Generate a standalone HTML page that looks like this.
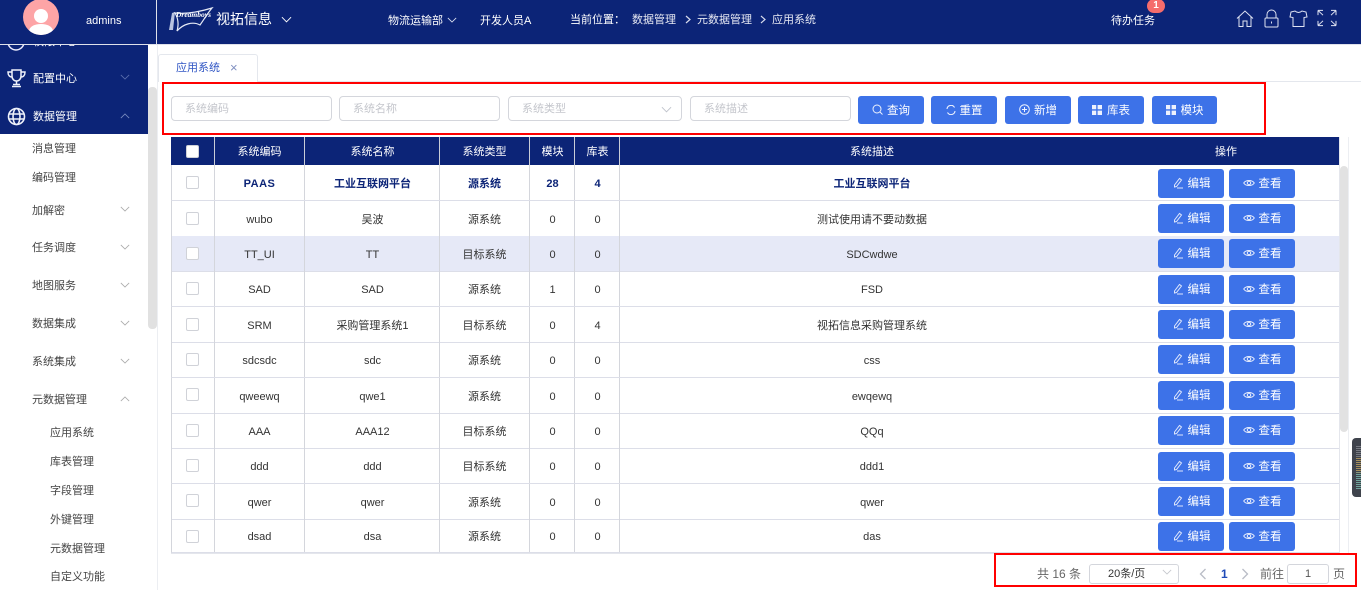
<!DOCTYPE html>
<html lang="zh"><head><meta charset="utf-8"><title>应用系统</title>
<style>
*{box-sizing:border-box}
html,body{margin:0;padding:0;width:1361px;height:590px;overflow:hidden;background:#fff;font:11px/1 "Liberation Sans","Noto Sans CJK SC",sans-serif;color:#333}
.a{position:absolute;white-space:nowrap}
.hd{position:absolute;left:0;top:0;width:1361px;height:44px;background:#0c2477}
.w{color:#fff}
.side{position:absolute;left:0;top:45px;width:148px;height:545px;overflow:hidden}
.dark{position:absolute;left:0;top:0;width:148px;height:89px;background:#0c2477}
.m{position:absolute;left:32px;color:#444;white-space:nowrap;margin-top:1px}
.s{position:absolute;left:50px;color:#444;white-space:nowrap;margin-top:1px}
.ch{position:absolute;left:120px;width:10px;height:6px;margin-top:1px}
.inp{position:absolute;top:96px;height:25px;border:1px solid #d4d6dc;border-radius:4px;color:#c4c6cc;padding:7px 13px;background:#fff}
.b{position:absolute;background:#3d72e8;color:#fff;border-radius:3px;display:flex;align-items:center;justify-content:center;gap:4px;font-size:11.5px;padding-top:3px}
.b svg{margin-bottom:4px}
.t{top:96px;height:28px}
.r{position:absolute;left:171px;width:1168px;border-bottom:1px solid #dcdee8;border-left:1px solid #d4d6dc;display:block}
.r>span{position:absolute;top:0;height:100%;display:flex;align-items:center;justify-content:center;border-left:1px solid #d4d6dc;padding-top:3px}
.c1{left:42px;width:90px}.c2{left:132px;width:136px}.c3{left:267px;width:90px}.c4{left:357px;width:46px}.c5{left:402px;width:46px}.c6{left:447px;width:505px}
.h{background:#0c2477;color:#fff;border-bottom:none;border-left:none}
.h>span{border-left:1px solid #c9cdd8;padding-top:2px}
.cb{position:absolute;width:13px;height:13px;border:1px solid #d0d2d8;border-radius:2px;background:#fff;left:186px}
.e{width:66px;height:29px;left:1158px}
.v{width:66px;height:29px;left:1229px}
.p{color:#666;position:absolute;white-space:nowrap;font-size:12px}
svg{display:block}
</style></head><body>
<svg width="0" height="0" style="position:absolute"><defs>
<symbol id="pen" viewBox="0 0 12 12"><path d="M2.5 8 L7.5 1.5 L9.5 3 L4.5 9.5 L2.5 10 Z M5 11 H11" fill="none" stroke="#dfe7fb" stroke-width="1"/></symbol>
<symbol id="eye" viewBox="0 0 12 12"><path d="M.7 6 C3 2.6 9 2.6 11.3 6 C9 9.4 3 9.4 .7 6 Z" fill="none" stroke="#e6ecfc" stroke-width="1"/><circle cx="6" cy="6" r="1.7" fill="none" stroke="#e6ecfc"/></symbol>
<symbol id="grid" viewBox="0 0 10 10"><path d="M0 0h4.2v4.2H0zM5.6 0H10v4.2H5.6zM0 5.6h4.2V10H0zM5.6 5.6H10V10H5.6z" fill="#eef2fd"/></symbol>
<symbol id="dn" viewBox="0 0 12 7"><path d="M1 1 L6 6 L11 1" fill="none" stroke="currentColor" stroke-width="1"/></symbol>
<symbol id="up" viewBox="0 0 12 7"><path d="M1 6 L6 1 L11 6" fill="none" stroke="currentColor" stroke-width="1"/></symbol>
</defs></svg>

<div class="hd"></div>
<div class="a" style="left:0;top:44px;width:1361px;height:1px;background:#dfe1ea"></div>
<div class="a" style="left:156px;top:0;width:1px;height:44px;background:#dfe1ea"></div>
<div class="a" style="left:23px;top:-1px;width:36px;height:36px;border-radius:50%;background:#fda4a6;overflow:hidden"><div style="position:absolute;left:11px;top:10px;width:14px;height:14px;border-radius:50%;background:#fff"></div><div style="position:absolute;left:6px;top:25px;width:24px;height:14px;border-radius:50%;background:#fff"></div></div>
<div class="a w" style="left:86px;top:16px">admins</div>

<svg class="a" style="left:167px;top:4px" width="47" height="28" viewBox="0 0 47 28"><path d="M2 26 L5 9 L8 8 L6 26 Z" fill="#b9c3e0"/><path d="M8 9 C18 10 32 8 45 4 C40 10 38 14 33 21 C26 17 16 20 10 27 C12 20 11 14 8 9 Z" fill="none" stroke="#e6eaf6" stroke-width="1.2"/><text x="9" y="13" font-family="Liberation Serif,serif" font-style="italic" font-weight="700" font-size="7.500" fill="#fff">Dreamboys</text></svg>
<div class="a w" style="left:216px;top:12px;font-size:14px">视拓信息</div>
<svg class="a w" style="left:281px;top:16px" width="11" height="7"><use href="#dn"/></svg>

<div class="a w" style="left:388px;top:16px">物流运输部</div>
<svg class="a w" style="left:447px;top:17px;color:#dfe3f2" width="10" height="6"><use href="#dn"/></svg>
<div class="a w" style="left:480px;top:16px">开发人员A</div>
<div class="a w" style="left:570px;top:15px">当前位置：</div>
<div class="a" style="left:632px;top:15px;color:#e6e8f2">数据管理</div>
<svg class="a" style="left:685px;top:15px" width="6" height="9" fill="none" stroke="#d8dcec" stroke-width="1.200"><path d="M1 1 L5 4.500 L1 8"/></svg>
<div class="a" style="left:697px;top:15px;color:#e6e8f2">元数据管理</div>
<svg class="a" style="left:760px;top:15px" width="6" height="9" fill="none" stroke="#d8dcec" stroke-width="1.200"><path d="M1 1 L5 4.500 L1 8"/></svg>
<div class="a" style="left:772px;top:15px;color:#e6e8f2">应用系统</div>

<div class="a w" style="left:1111px;top:16px">待办任务</div>
<div class="a" style="left:1147px;top:-1px;width:18px;height:14px;border-radius:8px;background:#f56c6c;color:#fff;text-align:center;line-height:14px;font-size:10px;font-weight:700">1</div>
<svg class="a" style="left:1235px;top:9px" width="120" height="20" viewBox="0 0 120 20" fill="none" stroke="#dfe3f2" stroke-width="1"><path d="M2 9.500 L10 2 L18 9.500 M4 8 V17.500 H8 V12 H12 V17.500 H16 V8"/><path d="M32 9 V5.500 A4.500 4.500 0 0 1 41 5.500 V9 M31 9 H42 Q43 9 43 10 V17 Q43 18 42 18 H31 Q30 18 30 17 V10 Q30 9 31 9 Z"/><path d="M36.500 12.500 V14.500"/><path d="M56 3 L60 2 Q63.500 5 67 2 L71 3 L72 8 L69 8.500 V17.500 H58 V8.500 L55 8 Z"/><path d="M84 2 H89 M84 2 V7 M84 2 L89 7 M102 2 H97 M102 2 V7 M102 2 L97 7 M84 18 H89 M84 18 V13 M84 18 L89 13 M102 18 H97 M102 18 V13 M102 18 L97 13" transform="translate(-1 -.5) scale(1 .95)"/></svg>

<div class="side">
<div class="dark"></div>
<svg class="a" style="left:6px;top:-10px" width="20" height="18" fill="none" stroke="#eef" stroke-width="1.5"><circle cx="10" cy="7" r="8"/></svg>
<div class="a" style="left:33px;top:-8px;color:#fff;height:10px;overflow:hidden;font-size:11px">权限中心</div>
<svg class="a" style="left:7px;top:24px" width="19" height="19" viewBox="0 0 19 19" fill="none" stroke="#eef1fa" stroke-width="1.5"><path d="M5 1 H14 V7 C14 10 12 12 9.500 12 C7 12 5 10 5 7 Z"/><path d="M5 3 H1 C1 6 2.500 8 5 8 M14 3 H18 C18 6 16.500 8 14 8 M9.500 12 V15 M5 17.500 H14 M6 15.500 H13"/></svg>
<div class="a w" style="left:33px;top:29px">配置中心</div>
<svg class="ch" style="top:28px;color:#5b6fae"><use href="#dn"/></svg>
<svg class="a" style="left:7px;top:62px" width="19" height="19" viewBox="0 0 19 19" fill="none" stroke="#eef1fa" stroke-width="1.6"><circle cx="9.500" cy="9.500" r="8"/><ellipse cx="9.500" cy="9.500" rx="3.500" ry="8"/><path d="M1.500 7 H17.500 M1.500 12 H17.500"/></svg>
<div class="a w" style="left:33px;top:67px">数据管理</div>
<svg class="ch" style="top:67px;color:#7b8cc0"><use href="#up"/></svg>

<div class="m" style="top:98px">消息管理</div>
<div class="m" style="top:127px">编码管理</div>
<div class="m" style="top:160px">加解密</div><svg class="ch" style="top:160px;color:#aaa"><use href="#dn"/></svg>
<div class="m" style="top:197px">任务调度</div><svg class="ch" style="top:198px;color:#aaa"><use href="#dn"/></svg>
<div class="m" style="top:235px">地图服务</div><svg class="ch" style="top:236px;color:#aaa"><use href="#dn"/></svg>
<div class="m" style="top:273px">数据集成</div><svg class="ch" style="top:274px;color:#aaa"><use href="#dn"/></svg>
<div class="m" style="top:311px">系统集成</div><svg class="ch" style="top:312px;color:#aaa"><use href="#dn"/></svg>
<div class="m" style="top:349px">元数据管理</div><svg class="ch" style="top:350px;color:#aaa"><use href="#up"/></svg>
<div class="s" style="top:382px">应用系统</div>
<div class="s" style="top:411px">库表管理</div>
<div class="s" style="top:440px">字段管理</div>
<div class="s" style="top:469px">外键管理</div>
<div class="s" style="top:498px">元数据管理</div>
<div class="s" style="top:526px">自定义功能</div>
</div>
<div class="a" style="left:148px;top:45px;width:9px;height:545px;background:#fff"></div>
<div class="a" style="left:148px;top:87px;width:9px;height:242px;background:#e1e1e1;border-radius:4px"></div>
<div class="a" style="left:157px;top:45px;width:1px;height:545px;background:#eceef2"></div>

<div class="a" style="left:158px;top:54px;width:100px;height:28px;border:1px solid #e4e7ed;border-bottom:none;border-radius:3px 3px 0 0;background:#fff"></div>
<div class="a" style="left:176px;top:63px;color:#2f55c4">应用系统</div>
<div class="a" style="left:230px;top:61px;color:#7f8fc0;font-size:13px">×</div>
<div class="a" style="left:258px;top:81px;width:1103px;height:1px;background:#e4e7ed"></div>

<div class="a" style="left:162px;top:82px;width:1104px;height:53px;border:2px solid #f00"></div>
<div class="inp" style="left:171px;width:161px">系统编码</div>
<div class="inp" style="left:339px;width:161px">系统名称</div>
<div class="inp" style="left:508px;width:174px">系统类型<svg class="a" style="left:152px;top:9px;color:#c0c4cc" width="11" height="7"><use href="#dn"/></svg></div>
<div class="inp" style="left:690px;width:161px">系统描述</div>
<div class="b t" style="left:858px;width:66px"><svg width="11" height="11" viewBox="0 0 11 11" fill="none" stroke="#eef2fd"><circle cx="5" cy="5" r="4"/><path d="M8 8 L10.500 10.500"/></svg>查询</div>
<div class="b t" style="left:931px;width:66px"><svg width="10" height="10" viewBox="0 0 10 10" fill="none" stroke="#eef2fd" stroke-width="1.100"><path d="M1 4 A4 4 0 0 1 8.500 2.500 M9 6 A4 4 0 0 1 1.500 7.500"/></svg>重置</div>
<div class="b t" style="left:1005px;width:66px"><svg width="11" height="11" viewBox="0 0 11 11" fill="none" stroke="#eef2fd"><circle cx="5.500" cy="5.500" r="4.800"/><path d="M3 5.500 H8 M5.500 3 V8"/></svg>新增</div>
<div class="b t" style="left:1078px;width:66px;gap:5px"><svg width="10" height="10"><use href="#grid"/></svg>库表</div>
<div class="b t" style="left:1152px;width:65px;gap:5px"><svg width="10" height="10"><use href="#grid"/></svg>模块</div>

<div class="r h" style="top:137px;height:28px;left:171px"><span class="c1" style="left:43px">系统编码</span><span class="c2" style="left:133px">系统名称</span><span class="c3" style="left:268px">系统类型</span><span class="c4" style="left:358px">模块</span><span class="c5" style="left:403px">库表</span><span class="c6" style="left:448px">系统描述</span><span style="left:942px;width:226px;border:none">操作</span></div>
<div class="cb" style="top:145px;border-radius:2px"></div>

<div class="r" style="top:165px;height:36px;color:#0c2477;font-weight:700"><span class="c1" style="letter-spacing:.5px">PAAS</span><span class="c2">工业互联网平台</span><span class="c3">源系统</span><span class="c4">28</span><span class="c5">4</span><span class="c6">工业互联网平台</span></div>
<div class="r" style="top:201px;height:36px"><span class="c1">wubo</span><span class="c2">吴波</span><span class="c3">源系统</span><span class="c4">0</span><span class="c5">0</span><span class="c6">测试使用请不要动数据</span></div>
<div class="r" style="top:236px;height:36px;background:#e6e9f7"><span class="c1">TT_UI</span><span class="c2">TT</span><span class="c3">目标系统</span><span class="c4">0</span><span class="c5">0</span><span class="c6">SDCwdwe</span></div>
<div class="r" style="top:271px;height:36px"><span class="c1">SAD</span><span class="c2">SAD</span><span class="c3">源系统</span><span class="c4">1</span><span class="c5">0</span><span class="c6">FSD</span></div>
<div class="r" style="top:307px;height:36px"><span class="c1">SRM</span><span class="c2">采购管理系统1</span><span class="c3">目标系统</span><span class="c4">0</span><span class="c5">4</span><span class="c6">视拓信息采购管理系统</span></div>
<div class="r" style="top:342px;height:36px"><span class="c1">sdcsdc</span><span class="c2">sdc</span><span class="c3">源系统</span><span class="c4">0</span><span class="c5">0</span><span class="c6">css</span></div>
<div class="r" style="top:378px;height:36px"><span class="c1">qweewq</span><span class="c2">qwe1</span><span class="c3">源系统</span><span class="c4">0</span><span class="c5">0</span><span class="c6">ewqewq</span></div>
<div class="r" style="top:413px;height:36px"><span class="c1">AAA</span><span class="c2">AAA12</span><span class="c3">目标系统</span><span class="c4">0</span><span class="c5">0</span><span class="c6">QQq</span></div>
<div class="r" style="top:448px;height:36px"><span class="c1">ddd</span><span class="c2">ddd</span><span class="c3">目标系统</span><span class="c4">0</span><span class="c5">0</span><span class="c6">ddd1</span></div>
<div class="r" style="top:484px;height:36px"><span class="c1">qwer</span><span class="c2">qwer</span><span class="c3">源系统</span><span class="c4">0</span><span class="c5">0</span><span class="c6">qwer</span></div>
<div class="r" style="top:519px;height:34px"><span class="c1">dsad</span><span class="c2">dsa</span><span class="c3">源系统</span><span class="c4">0</span><span class="c5">0</span><span class="c6">das</span></div>

<div class="cb" style="top:176px"></div><div class="cb" style="top:212px"></div><div class="cb" style="top:247px"></div><div class="cb" style="top:282px"></div><div class="cb" style="top:318px"></div><div class="cb" style="top:353px"></div><div class="cb" style="top:388px"></div><div class="cb" style="top:424px"></div><div class="cb" style="top:459px"></div><div class="cb" style="top:494px"></div><div class="cb" style="top:530px"></div>

<div class="b e" style="top:169px"><svg width="12" height="12"><use href="#pen"/></svg>编辑</div><div class="b v" style="top:169px"><svg width="12" height="12"><use href="#eye"/></svg>查看</div>
<div class="b e" style="top:204px"><svg width="12" height="12"><use href="#pen"/></svg>编辑</div><div class="b v" style="top:204px"><svg width="12" height="12"><use href="#eye"/></svg>查看</div>
<div class="b e" style="top:239px"><svg width="12" height="12"><use href="#pen"/></svg>编辑</div><div class="b v" style="top:239px"><svg width="12" height="12"><use href="#eye"/></svg>查看</div>
<div class="b e" style="top:275px"><svg width="12" height="12"><use href="#pen"/></svg>编辑</div><div class="b v" style="top:275px"><svg width="12" height="12"><use href="#eye"/></svg>查看</div>
<div class="b e" style="top:310px"><svg width="12" height="12"><use href="#pen"/></svg>编辑</div><div class="b v" style="top:310px"><svg width="12" height="12"><use href="#eye"/></svg>查看</div>
<div class="b e" style="top:345px"><svg width="12" height="12"><use href="#pen"/></svg>编辑</div><div class="b v" style="top:345px"><svg width="12" height="12"><use href="#eye"/></svg>查看</div>
<div class="b e" style="top:381px"><svg width="12" height="12"><use href="#pen"/></svg>编辑</div><div class="b v" style="top:381px"><svg width="12" height="12"><use href="#eye"/></svg>查看</div>
<div class="b e" style="top:416px"><svg width="12" height="12"><use href="#pen"/></svg>编辑</div><div class="b v" style="top:416px"><svg width="12" height="12"><use href="#eye"/></svg>查看</div>
<div class="b e" style="top:452px"><svg width="12" height="12"><use href="#pen"/></svg>编辑</div><div class="b v" style="top:452px"><svg width="12" height="12"><use href="#eye"/></svg>查看</div>
<div class="b e" style="top:487px"><svg width="12" height="12"><use href="#pen"/></svg>编辑</div><div class="b v" style="top:487px"><svg width="12" height="12"><use href="#eye"/></svg>查看</div>
<div class="b e" style="top:522px"><svg width="12" height="12"><use href="#pen"/></svg>编辑</div><div class="b v" style="top:522px"><svg width="12" height="12"><use href="#eye"/></svg>查看</div>

<div class="a" style="left:1339px;top:137px;width:10px;height:416px;border-left:1px solid #e4e6ec;border-right:1px solid #eceef2"></div>
<div class="a" style="left:1340px;top:166px;width:8px;height:266px;background:#e2e2e2;border-radius:4px"></div>
<div class="a" style="left:171px;top:553px;width:1168px;height:1px;background:#e4e6ec"></div>

<div class="a" style="left:1352px;top:438px;width:9px;height:59px;background:#3f434c;border-radius:4px 0 0 4px"></div>
<div class="a" style="left:1356px;top:446px;width:5px;height:44px;background:linear-gradient(#8a8d94 0 25%,#c9a860 25% 60%,#7fc4b4 60%);opacity:.75"></div>
<div class="a" style="left:1356px;top:446px;width:5px;height:44px;background:repeating-linear-gradient(transparent 0 1px,#3f434c 1px 2px)"></div>

<div class="a" style="left:994px;top:553px;width:363px;height:34px;border:2px solid #f00"></div>
<div class="p" style="left:1037px;top:568px">共 16 条</div>
<div class="a" style="left:1089px;top:564px;width:90px;height:20px;border:1px solid #d4d6dc;border-radius:3px;padding:4px 0 0 18px;color:#333;font-size:11px">20条/页<svg class="a" style="left:72px;top:4px;color:#c4c6cc" width="10" height="6"><use href="#dn"/></svg></div>
<svg class="a" style="left:1199px;top:568px" width="8" height="12" fill="none" stroke="#b8bcc6" stroke-width="1.300"><path d="M6.500 1 L1.500 6 L6.500 11"/></svg>
<div class="a" style="left:1221px;top:568px;color:#1f4bb8;font-weight:700;font-size:12px">1</div>
<svg class="a" style="left:1241px;top:568px" width="8" height="12" fill="none" stroke="#b8bcc6" stroke-width="1.300"><path d="M1.500 1 L6.500 6 L1.500 11"/></svg>
<div class="p" style="left:1260px;top:568px">前往</div>
<div class="a" style="left:1287px;top:564px;width:42px;height:20px;border:1px solid #d4d6dc;border-radius:3px;text-align:center;line-height:18px;color:#555">1</div>
<div class="p" style="left:1333px;top:568px">页</div>
</body></html>
